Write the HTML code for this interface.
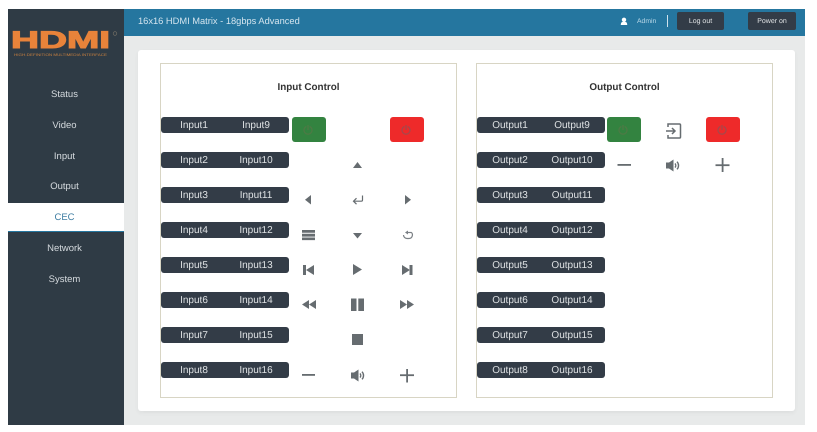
<!DOCTYPE html>
<html><head><meta charset="utf-8">
<style>
html,body{margin:0;padding:0;background:#fff;}
body{width:817px;height:432px;overflow:hidden;position:relative;font-family:"Liberation Sans",sans-serif;text-rendering:geometricPrecision;filter:blur(.3px);}
div{position:absolute;box-sizing:border-box;}
#side{left:8px;top:9px;width:116px;height:416px;background:#2f3b45;}
#top{left:124px;top:9px;width:681px;height:27px;background:#25769f;}
#main{left:124px;top:36px;width:681px;height:389px;background:#e8eaea;}
#card{left:138px;top:50px;width:657px;height:361px;background:#fff;border-radius:3px;box-shadow:0 2px 5px rgba(0,0,0,.05);}
.panel{top:63px;width:297px;height:335px;border:1px solid #d8d5c4;background:#fff;}
.m{left:8px;width:113px;height:30px;line-height:32px;text-align:center;font-size:9.5px;color:#d5dade;}
.h{top:81px;width:297px;text-align:center;font-weight:bold;font-size:9.9px;color:#333;line-height:14px;}
.l{width:128px;height:15.5px;background:#333c47;border-radius:3px;color:#dfe2e4;font-size:10px;line-height:15px;}
.l span{position:absolute;top:1px;text-align:center;white-space:nowrap;}
.a{left:0;width:66px;}.b{left:61px;width:68px;}
.btn{width:34px;height:25px;border-radius:3px;}
.tb{top:12px;height:18px;background:#333c47;border-radius:2px;color:#dfe2e4;font-size:7px;line-height:19px;text-align:center;}
svg{position:absolute;left:0;top:0;}
</style></head><body>
<div id="side"></div>
<div id="top"></div>
<div id="main"></div>
<div id="card"></div>
<div class="panel" style="left:160px"></div>
<div class="panel" style="left:476px"></div>

<div style="left:138px;top:14px;font-size:9.3px;line-height:14px;color:#d3e4ee;white-space:nowrap">16x16 HDMI Matrix - 18gbps Advanced</div>
<div style="left:637px;top:17px;font-size:6.8px;line-height:9px;color:#b9d8e8">Admin</div>
<div style="left:667px;top:15px;width:1px;height:12px;background:#cfe2ec"></div>
<div class="tb" style="left:677px;width:47px">Log out</div>
<div class="tb" style="left:748px;width:48px">Power on</div>

<div class="m" style="top:79px">Status</div>
<div class="m" style="top:110px">Video</div>
<div class="m" style="top:141px">Input</div>
<div class="m" style="top:171px">Output</div>
<div style="left:8px;top:203px;width:116px;height:29px;background:#fff;border-bottom:1.5px solid #25769f"></div>
<div class="m" style="top:202px;color:#3f7ea3">CEC</div>
<div class="m" style="top:233px">Network</div>
<div class="m" style="top:264px">System</div>

<div class="h" style="left:160px">Input Control</div>
<div class="h" style="left:476px">Output Control</div>

<div class="l" style="left:161px;top:117px"><span class="a">Input1</span><span class="b">Input9</span></div>
<div class="l" style="left:161px;top:152px"><span class="a">Input2</span><span class="b">Input10</span></div>
<div class="l" style="left:161px;top:187px"><span class="a">Input3</span><span class="b">Input11</span></div>
<div class="l" style="left:161px;top:222px"><span class="a">Input4</span><span class="b">Input12</span></div>
<div class="l" style="left:161px;top:257px"><span class="a">Input5</span><span class="b">Input13</span></div>
<div class="l" style="left:161px;top:292px"><span class="a">Input6</span><span class="b">Input14</span></div>
<div class="l" style="left:161px;top:327px"><span class="a">Input7</span><span class="b">Input15</span></div>
<div class="l" style="left:161px;top:362px"><span class="a">Input8</span><span class="b">Input16</span></div>

<div class="l" style="left:477px;top:117px"><span class="a">Output1</span><span class="b">Output9</span></div>
<div class="l" style="left:477px;top:152px"><span class="a">Output2</span><span class="b">Output10</span></div>
<div class="l" style="left:477px;top:187px"><span class="a">Output3</span><span class="b">Output11</span></div>
<div class="l" style="left:477px;top:222px"><span class="a">Output4</span><span class="b">Output12</span></div>
<div class="l" style="left:477px;top:257px"><span class="a">Output5</span><span class="b">Output13</span></div>
<div class="l" style="left:477px;top:292px"><span class="a">Output6</span><span class="b">Output14</span></div>
<div class="l" style="left:477px;top:327px"><span class="a">Output7</span><span class="b">Output15</span></div>
<div class="l" style="left:477px;top:362px"><span class="a">Output8</span><span class="b">Output16</span></div>

<div class="btn" style="left:292px;top:117px;background:#338340"></div>
<div class="btn" style="left:390px;top:117px;background:#ee2a2a"></div>
<div class="btn" style="left:607px;top:117px;background:#338340"></div>
<div class="btn" style="left:706px;top:117px;background:#ee2a2a"></div>

<svg width="817" height="432" viewBox="0 0 817 432">
<text x="11" y="48" font-family="Liberation Sans" font-weight="bold" font-size="24" fill="#e8833a" stroke="#e8833a" stroke-width="1.100" textLength="99" lengthAdjust="spacingAndGlyphs">HDMI</text>
<text x="14" y="56" font-family="Liberation Sans" font-size="3.6" fill="#c9803f" textLength="93" lengthAdjust="spacingAndGlyphs">HIGH-DEFINITION MULTIMEDIA INTERFACE</text>
<circle cx="115" cy="33.500" r="1.800" fill="none" stroke="#7b7468" stroke-width=".6"/>

<!-- user -->
<circle cx="624" cy="19.800" r="2.200" fill="#fff"/>
<path d="M620.800 25c0-2.600 1-3.200 3.200-3.200s3.200.6 3.200 3.200z" fill="#fff"/>

<!-- power icons -->
<g fill="none" stroke-width="1.300">
<path d="M306.400 126.500a4 4 0 1 0 3.200 0M308 125v5" stroke="#4d7a45"/>
<path d="M404.400 126.500a4 4 0 1 0 3.200 0M406 125v5" stroke="#a8474a"/>
<path d="M621.400 126.500a4 4 0 1 0 3.200 0M623 125v5" stroke="#4d7a45"/>
<path d="M720.400 126.500a4 4 0 1 0 3.200 0M722 125v5" stroke="#a8474a"/>
</g>

<g fill="#666c70">
<!-- arrows -->
<path d="M353 168l4.500-6 4.500 6z"/>
<path d="M311 195v9.500l-6-4.750z"/>
<path d="M405 195v9.500l6-4.750z"/>
<path d="M353 233h9l-4.500 5.500z"/>
<!-- menu -->
<path d="M302 230h13v2.800h-13zM302 233.800h13v2.800h-13zM302 237.500h13v2.600h-13z"/>
<!-- prev / play / next -->
<path d="M303 265h3v10h-3zM314 265v10l-8-5z"/>
<path d="M353 264v11l9-5.500z"/>
<path d="M402 265v10l8-5zM409.500 265h3v10h-3z"/>
<!-- rewind / pause / forward -->
<path d="M309 300v9l-7-4.500zM316 300v9l-7-4.500z"/>
<path d="M351 298.500h5.500v12.500h-5.500zM358.300 298.500h5.700v12.500h-5.700z"/>
<path d="M400 300v9l7-4.500zM407 300v9l7-4.500z"/>
<!-- stop -->
<rect x="352" y="334" width="11" height="11"/>
<!-- speakers -->
<path d="M351 372.500h3l4.500-3v12l-4.500-3h-3z"/>
<path d="M666 162.500h3l4.500-3v12l-4.500-3h-3z"/>
<!-- minus / plus -->
<rect x="302" y="374" width="13" height="1.800"/>
<rect x="400" y="374.300" width="14" height="1.800"/>
<rect x="406.200" y="369" width="1.800" height="13.500"/>
<rect x="617.500" y="164" width="13.500" height="1.800"/>
<rect x="715.500" y="164.300" width="14" height="1.800"/>
<rect x="721.700" y="158" width="1.800" height="14"/>
</g>

<g fill="none" stroke="#666c70" stroke-width="1.200">
<!-- enter -->
<path d="M362.500 195.500v4.500c0 .8-.5 1.200-1.200 1.200H354"/>
<path d="M356.500 198.200l-3 3 3 3"/>
<!-- repeat -->
<path d="M403.500 235a3.500 3.500 0 0 0 3.500 3.500h2a3.500 3.500 0 0 0 2-6.300" stroke="#7b8085"/>
<path d="M406 232.500h5" stroke="#7b8085"/>
<!-- speaker waves -->
<path d="M360 373.500a3 3 0 0 1 0 4M362 371.700a5.500 5.500 0 0 1 0 7.600" stroke-width="1.400"/>
<path d="M675 163.500a3 3 0 0 1 0 4M677 161.700a5.500 5.500 0 0 1 0 7.600" stroke-width="1.400"/>
<!-- input source -->
<path d="M668 127v-3h11.500c.6 0 1 .4 1 1v12c0 .6-.4 1-1 1H668v-3" stroke-width="1.500"/>
<path d="M666 131h9M672 128l3 3-3 3" stroke-width="1.500"/>
</g>
<path d="M408 230.500l-3 2 3 2z" fill="#7b8085"/>
</svg>
</body></html>
